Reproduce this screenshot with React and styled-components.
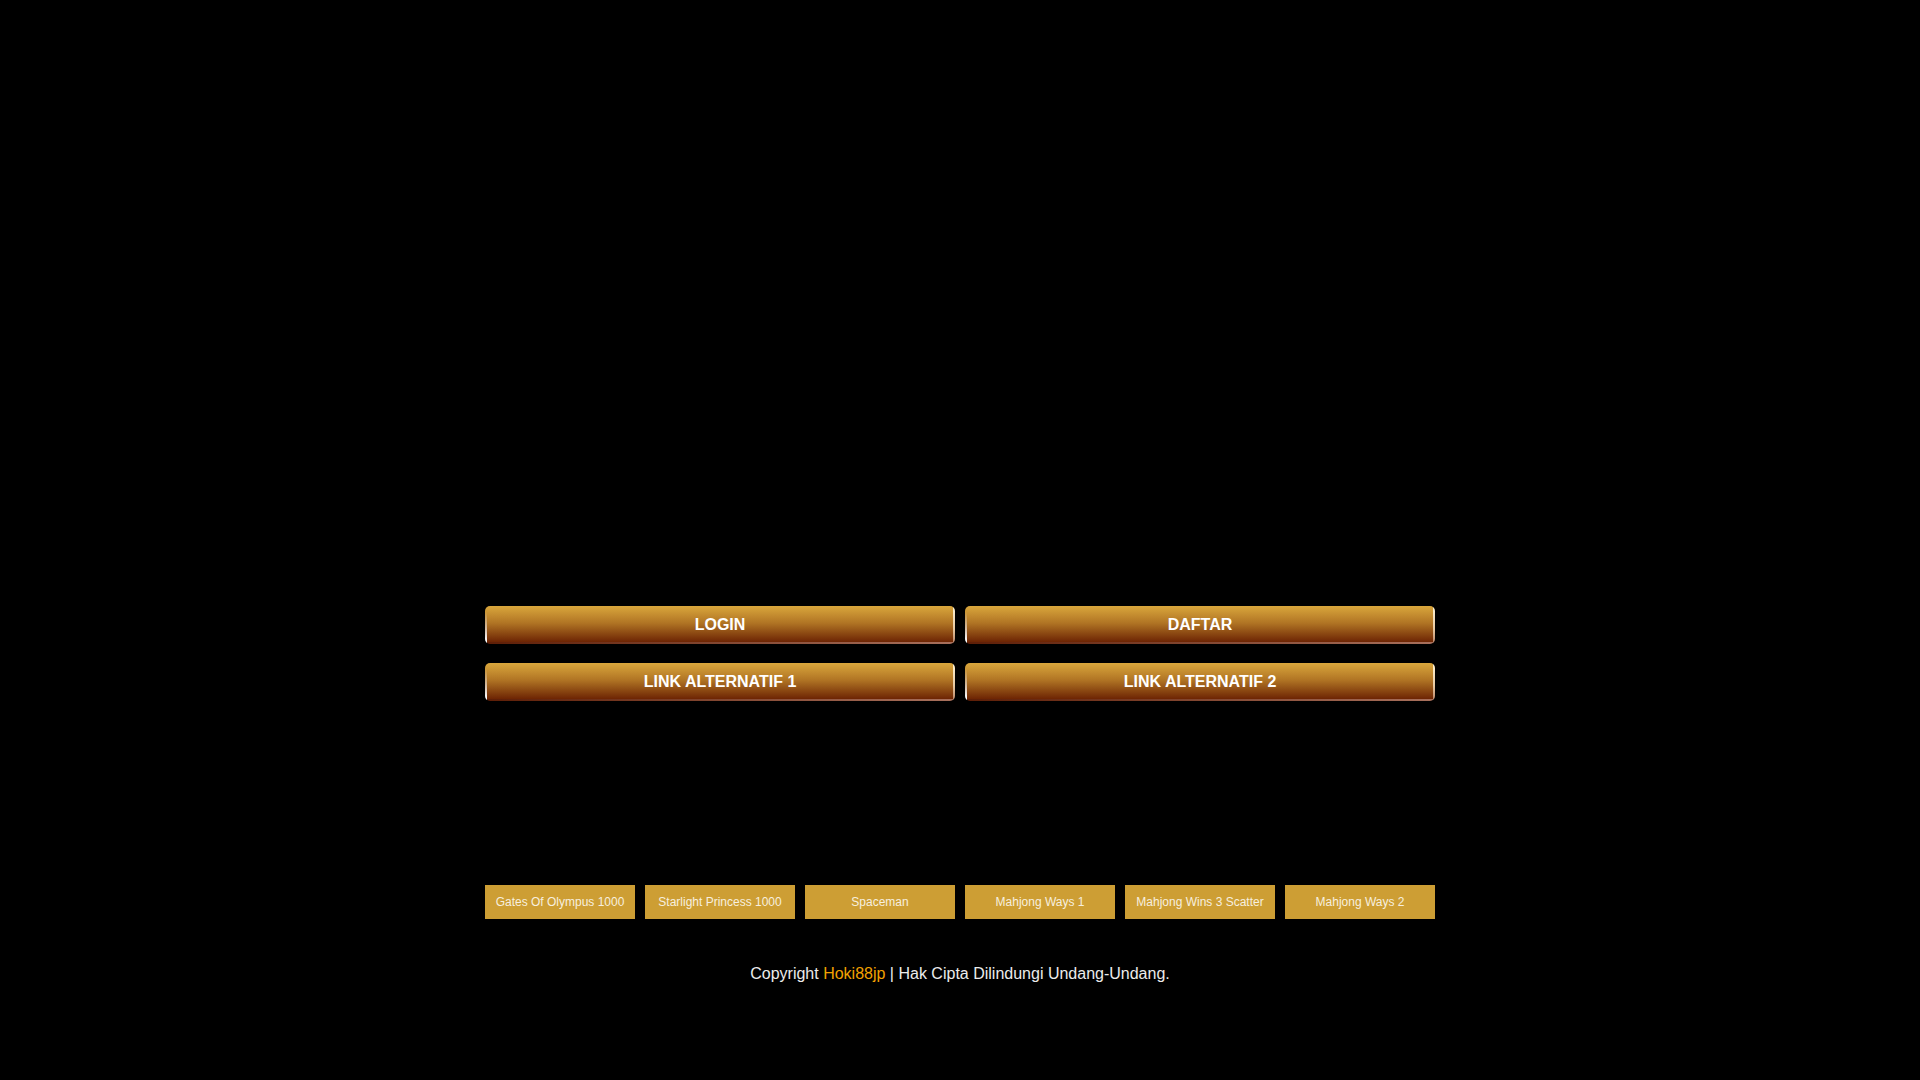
import styled, { createGlobalStyle } from "styled-components";

const GlobalStyle = createGlobalStyle`
  html, body {
    margin: 0;
    padding: 0;
    background-color: #000;
  }
  body {
    font-family: "Liberation Sans", Arial, sans-serif;
    color: #fff;
  }
`;

const Page = styled.div`
  width: 950px;
  margin: 0 auto;
  display: flex;
  flex-direction: column;
  min-height: 1080px;
`;

const Banner = styled.div`
  height: 606px;
`;

const ButtonGrid = styled.div`
  display: grid;
  grid-template-columns: 1fr 1fr;
  column-gap: 10px;
  row-gap: 19px;
`;

const GoldButton = styled.a`
  box-sizing: border-box;
  height: 38px;
  display: flex;
  align-items: center;
  justify-content: center;
  border-radius: 5px;
  color: #fff;
  font-weight: 700;
  font-size: 16px;
  text-decoration: none;
  background:
    linear-gradient(to bottom, rgba(255, 255, 255, 0) 15%, #ffffff 90%) left top / 2px 100% no-repeat,
    linear-gradient(to bottom, #fff4d6 0%, #e8c9a0 60%, #b78064 100%) right top / 2px 100% no-repeat,
    linear-gradient(to right, #5e1e06 0%, #a8705c 100%) left bottom / 100% 2px no-repeat,
    linear-gradient(to bottom, #daa73c 0%, #b07424 45%, #661c00 100%);
`;

const Games = styled.div`
  display: grid;
  grid-template-columns: repeat(6, 1fr);
  gap: 10px;
  margin-top: 34px;
`;

const Game = styled.a`
  display: flex;
  flex-direction: column;
  text-decoration: none;
`;

const Thumb = styled.div`
  height: 150px;
`;

const GameLabel = styled.div`
  height: 34px;
  display: flex;
  align-items: center;
  justify-content: center;
  background-color: #cd9e34;
  color: #f7efdf;
  font-size: 12px;
  white-space: nowrap;
`;

const Footer = styled.p`
  margin: 46px 0 0;
  text-align: center;
  font-size: 16px;
  line-height: 18px;
  color: #ececec;
`;

const Brand = styled.span`
  color: #f2a200;
`;

const buttons = ["LOGIN", "DAFTAR", "LINK ALTERNATIF 1", "LINK ALTERNATIF 2"];
const games = [
  "Gates Of Olympus 1000",
  "Starlight Princess 1000",
  "Spaceman",
  "Mahjong Ways 1",
  "Mahjong Wins 3 Scatter",
  "Mahjong Ways 2",
];

const App = () => {
  return (
    <>
      <GlobalStyle />
      <Page>
        <Banner />
        <ButtonGrid>
          {buttons.map((b) => (
            <GoldButton key={b} href="#">
              {b}
            </GoldButton>
          ))}
        </ButtonGrid>
        <Games>
          {games.map((g) => (
            <Game key={g} href="#">
              <Thumb />
              <GameLabel>{g}</GameLabel>
            </Game>
          ))}
        </Games>
        <Footer>
          Copyright <Brand>Hoki88jp</Brand> | Hak Cipta Dilindungi Undang-Undang.
        </Footer>
      </Page>
    </>
  );
};

export default App;
